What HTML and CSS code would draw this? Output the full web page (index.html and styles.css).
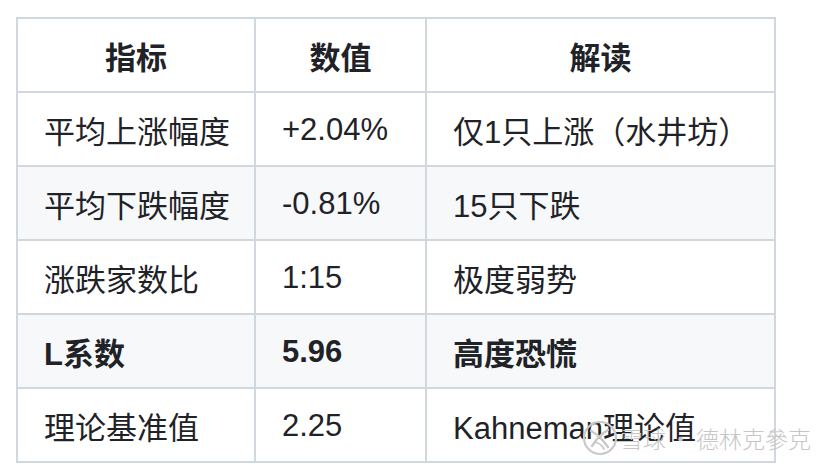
FILE: index.html
```html
<!DOCTYPE html>
<html lang="zh-CN">
<head>
<meta charset="utf-8">
<title>指标表</title>
<link rel="stylesheet" href="styles.css">
</head>
<body>
<div class="table">
  <div class="row head">
    <div class="cell">指标</div>
    <div class="cell">数值</div>
    <div class="cell">解读</div>
  </div>
  <div class="row">
    <div class="cell">平均上涨幅度</div>
    <div class="cell">+2.04%</div>
    <div class="cell">仅1只上涨（水井坊）</div>
  </div>
  <div class="row alt">
    <div class="cell">平均下跌幅度</div>
    <div class="cell">-0.81%</div>
    <div class="cell">15只下跌</div>
  </div>
  <div class="row">
    <div class="cell">涨跌家数比</div>
    <div class="cell">1:15</div>
    <div class="cell">极度弱势</div>
  </div>
  <div class="row alt strong">
    <div class="cell">L系数</div>
    <div class="cell">5.96</div>
    <div class="cell">高度恐慌</div>
  </div>
  <div class="row">
    <div class="cell">理论基准值</div>
    <div class="cell">2.25</div>
    <div class="cell">Kahneman理论值</div>
  </div>
</div>
<div class="watermark">
  <svg class="wm-logo" width="36" height="36" viewBox="0 0 36 36">
    <circle cx="18" cy="18" r="16" fill="none" stroke="#c9c9c9" stroke-width="2.2"/>
    <path d="M9 11 C 15 14, 21 20, 26 27" fill="none" stroke="#c9c9c9" stroke-width="2.4" stroke-linecap="round"/>
    <path d="M26 10 C 20 13, 14 20, 10 26" fill="none" stroke="#c9c9c9" stroke-width="2.4" stroke-linecap="round"/>
    <path d="M13 22 C 17 23, 20 25, 22 29" fill="none" stroke="#c9c9c9" stroke-width="1.8" stroke-linecap="round"/>
  </svg>
  <span class="wm-text">雪球</span><span class="wm-dot">·</span><span class="wm-text">德林克參克</span>
</div>
</body>
</html>
```

FILE: styles.css
```css
html, body {
  margin: 0;
  padding: 0;
  background: #ffffff;
}

body {
  font-family: "Liberation Sans", "Noto Sans CJK SC", sans-serif;
  color: #1f2328;
  font-size: 31px;
}

.table {
  display: flex;
  flex-direction: column;
  gap: 2px;
  padding: 2px;
  background: #d0d7de;
  width: fit-content;
  margin: 17px 0 0 16px;
}

.row {
  display: grid;
  grid-template-columns: 236px 169px 347px;
  column-gap: 2px;
}

.cell {
  height: 72px;
  display: flex;
  align-items: center;
  padding: 1px 26px 0;
  background: #ffffff;
  white-space: nowrap;
  box-sizing: border-box;
}

.row.alt .cell {
  background: #f6f8fa;
}

.row.head .cell {
  justify-content: center;
  font-weight: 700;
}

.row.strong .cell {
  font-weight: 700;
}

.watermark {
  position: absolute;
  left: 582px;
  top: 420px;
  display: flex;
  align-items: center;
  color: #c6c6c6;
  font-family: "Noto Sans CJK TC", "Noto Sans CJK SC", sans-serif;
  font-size: 23px;
  font-weight: 300;
  line-height: 36px;
}

.wm-logo {
  margin-right: 2px;
}

.wm-dot {
  margin: 0 4px 0 3px;
}
```
